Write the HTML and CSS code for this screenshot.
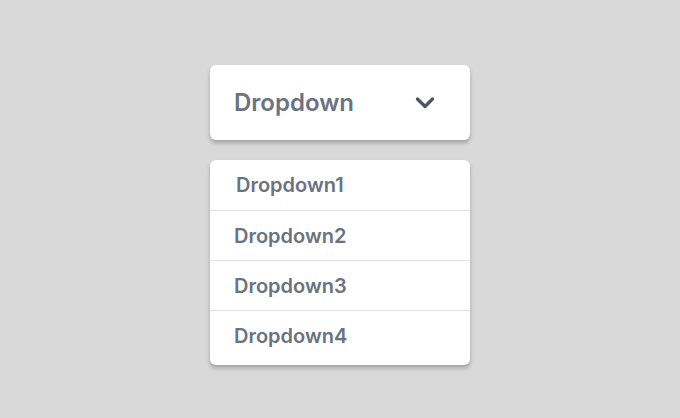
FILE: index.html
```html
<!DOCTYPE html>
<html>
<head>
<meta charset="utf-8">
<link rel="stylesheet" href="styles.css">
</head>
<body>
<div class="wrap">
  <div class="select">
    <span class="label">Dropdown</span>
    <svg class="chev" width="20" height="12" viewBox="0 0 20 12"><path d="M2.5 2 L10 9.5 L17.5 2" fill="none" stroke="#4b5563" stroke-width="3.2" stroke-linecap="round" stroke-linejoin="round"/></svg>
  </div>
  <ul class="menu">
    <li class="item first">Dropdown1</li>
    <li class="item">Dropdown2</li>
    <li class="item">Dropdown3</li>
    <li class="item">Dropdown4</li>
  </ul>
</div>
</body>
</html>
```
FILE: styles.css
```css
html, body { margin: 0; padding: 0; }
body {
  background: #d9d9d9;
  width: 680px;
  height: 418px;
  font-family: Inter, "Noto Sans", sans-serif;
}
.wrap {
  display: flex;
  flex-direction: column;
  align-items: center;
  padding-top: 65px;
  gap: 20px;
}
.select {
  box-sizing: border-box;
  width: 260px;
  height: 75px;
  background: #fff;
  border-radius: 6px;
  box-shadow: 0 3px 4px rgba(0,0,0,0.25);
  display: flex;
  align-items: center;
  justify-content: space-between;
  padding: 0 35px 0 24px;
}
.label {
  font-size: 24px;
  font-weight: 600;
  color: #6b7280;
}
.chev { display: block; }
.menu {
  list-style: none;
  margin: 0;
  padding: 0 0 4px;
  width: 260px;
  background: #fff;
  border-radius: 6px;
  box-shadow: 0 3px 4px rgba(0,0,0,0.25);
}
.item {
  box-sizing: border-box;
  height: 50px;
  display: flex;
  align-items: center;
  padding-left: 24px;
  font-size: 20px;
  font-weight: 600;
  color: #6b7280;
  border-bottom: 1px solid #e2e2e6;
}
.item.first { padding-left: 26px; height: 51px; }
.item:last-child { border-bottom: none; }
```
